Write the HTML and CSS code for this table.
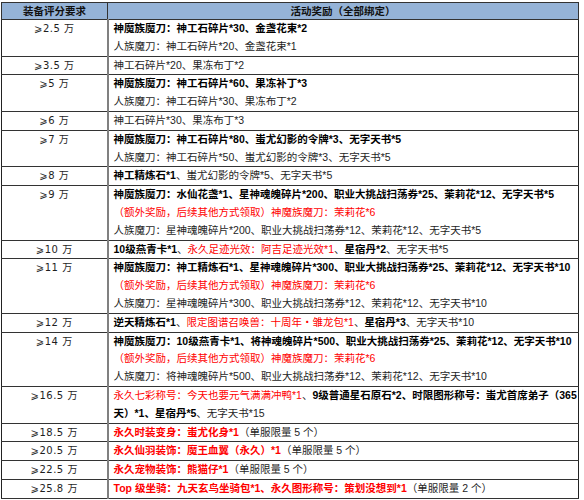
FILE: index.html
```html
<!DOCTYPE html>
<html lang="zh">
<head>
<meta charset="utf-8">
<link rel="stylesheet" href="styles.css">
</head>
<body>
<table class="tbl">
  <colgroup><col class="c1"><col class="c2"></colgroup>
  <thead>
    <tr><th>装备评分要求</th><th>活动奖励（全部绑定）</th></tr>
  </thead>
  <tbody>
    <tr><td class="lv">⩾2.5 万</td><td class="rw">
      <div class="b">神魔族魔刀：神工石碎片*30、金盏花束*2</div>
      <div>人族魔刀：神工石碎片*20、金盏花束*1</div></td></tr>
    <tr><td class="lv">⩾3.5 万</td><td class="rw"><div>神工石碎片*20、果冻布丁*2</div></td></tr>
    <tr><td class="lv">⩾5 万</td><td class="rw">
      <div class="b">神魔族魔刀：神工石碎片*60、果冻补丁*3</div>
      <div>人族魔刀：神工石碎片*30、果冻布丁*2</div></td></tr>
    <tr><td class="lv">⩾6 万</td><td class="rw"><div>神工石碎片*30、果冻布丁*3</div></td></tr>
    <tr><td class="lv">⩾7 万</td><td class="rw">
      <div class="b">神魔族魔刀：神工石碎片*80、蚩尤幻影的令牌*3、无字天书*5</div>
      <div>人族魔刀：神工石碎片*50、蚩尤幻影的令牌*3、无字天书*5</div></td></tr>
    <tr><td class="lv">⩾8 万</td><td class="rw"><div><b>神工精炼石*1</b>、蚩尤幻影的令牌*5、无字天书*5</div></td></tr>
    <tr><td class="lv">⩾9 万</td><td class="rw">
      <div class="b">神魔族魔刀：水仙花盏*1、星神魂魄碎片*200、职业大挑战扫荡券*25、茉莉花*12、无字天书*5</div>
      <div class="red">（额外奖励，后续其他方式领取）神魔族魔刀：茉莉花*6</div>
      <div>人族魔刀：星神魂魄碎片*200、职业大挑战扫荡券*12、茉莉花*12、无字天书*5</div></td></tr>
    <tr><td class="lv">⩾10 万</td><td class="rw"><div><b>10级燕青卡*1</b>、<span class="red">永久足迹光效：阿吉足迹光效*1</span>、<b>星宿丹*2</b>、无字天书*5</div></td></tr>
    <tr><td class="lv">⩾11 万</td><td class="rw">
      <div class="b">神魔族魔刀：神工精炼石*1、星神魂魄碎片*300、职业大挑战扫荡券*25、茉莉花*12、无字天书*10</div>
      <div class="red">（额外奖励，后续其他方式领取）神魔族魔刀：茉莉花*6</div>
      <div>人族魔刀：星神魂魄碎片*300、职业大挑战扫荡券*12、茉莉花*12、无字天书*10</div></td></tr>
    <tr><td class="lv">⩾12 万</td><td class="rw"><div><b>逆天精炼石*1</b>、<span class="red">限定图谱召唤兽：十周年・雏龙包*1</span>、<b>星宿丹*3</b>、无字天书*10</div></td></tr>
    <tr><td class="lv">⩾14 万</td><td class="rw">
      <div class="b">神魔族魔刀：10级燕青卡*1、将神魂魄碎片*500、职业大挑战扫荡券*25、茉莉花*12、无字天书*10</div>
      <div class="red">（额外奖励，后续其他方式领取）神魔族魔刀：茉莉花*6</div>
      <div>人族魔刀：将神魂魄碎片*500、职业大挑战扫荡券*12、茉莉花*12、无字天书*10</div></td></tr>
    <tr><td class="lv">⩾16.5 万</td><td class="rw wrapany"><div><span class="red">永久七彩称号：今天也要元气满满冲鸭*1</span>、<b>9级普通星石原石*2、时限图形称号：蚩尤首席弟子（365天）*1、星宿丹*5</b>、无字天书*15</div></td></tr>
    <tr><td class="lv">⩾18.5 万</td><td class="rw"><div><b class="red">永久时装变身：蚩尤化身*1</b>（单服限量 5 个）</div></td></tr>
    <tr><td class="lv">⩾20.5 万</td><td class="rw"><div><b class="red">永久仙羽装饰：魔王血翼（永久）*1</b>（单服限量 5 个）</div></td></tr>
    <tr><td class="lv">⩾22.5 万</td><td class="rw"><div><b class="red">永久宠物装饰：熊猫仔*1</b>（单服限量 5 个）</div></td></tr>
    <tr><td class="lv">⩾25.8 万</td><td class="rw"><div><b class="red">Top 级坐骑：九天玄鸟坐骑包*1、永久图形称号：策划没想到*1</b>（单服限量 2 个）</div></td></tr>
  </tbody>
</table>
</body>
</html>
```

FILE: styles.css
```css
html, body {
  margin: 0;
  padding: 0;
  background: #ffffff;
}
body {
  font-family: "Liberation Sans", "Noto Sans CJK SC", "DejaVu Sans", sans-serif;
  font-size: 10.5px;
  color: #1e1e1e;
}
.tbl {
  margin: 2px 0 0 1px;
  width: 578px;
  border-collapse: collapse;
  table-layout: fixed;
  border: 1px solid #222;
}
.c1 { width: 106px; }
.tbl th {
  background: #95b3d7;
  font-weight: bold;
  height: 16px;
  line-height: 16px;
  padding: 0;
  text-align: center;
  border: 1px solid #333;
  color: #111;
}
.tbl td {
  padding: 0;
  border-top: 1px solid #333;
  border-bottom: 1px solid #333;
  vertical-align: top;
  line-height: 17.8px;
}
.tbl td.lv {
  text-align: center;
  border-right: 2px solid #808080;
  font-family: "DejaVu Sans", "Noto Sans CJK SC", sans-serif;
  font-size: 10px;
  letter-spacing: 0.5px;
}
.tbl td.rw {
  padding-left: 5px;
  padding-right: 1px;
}
.tbl td.wrapany {
  word-break: break-all;
  line-break: anywhere;
}
.b, b { font-weight: bold; color: #000; }
.red { color: #ff0000; }
b.red { color: #ff0000; }
```
